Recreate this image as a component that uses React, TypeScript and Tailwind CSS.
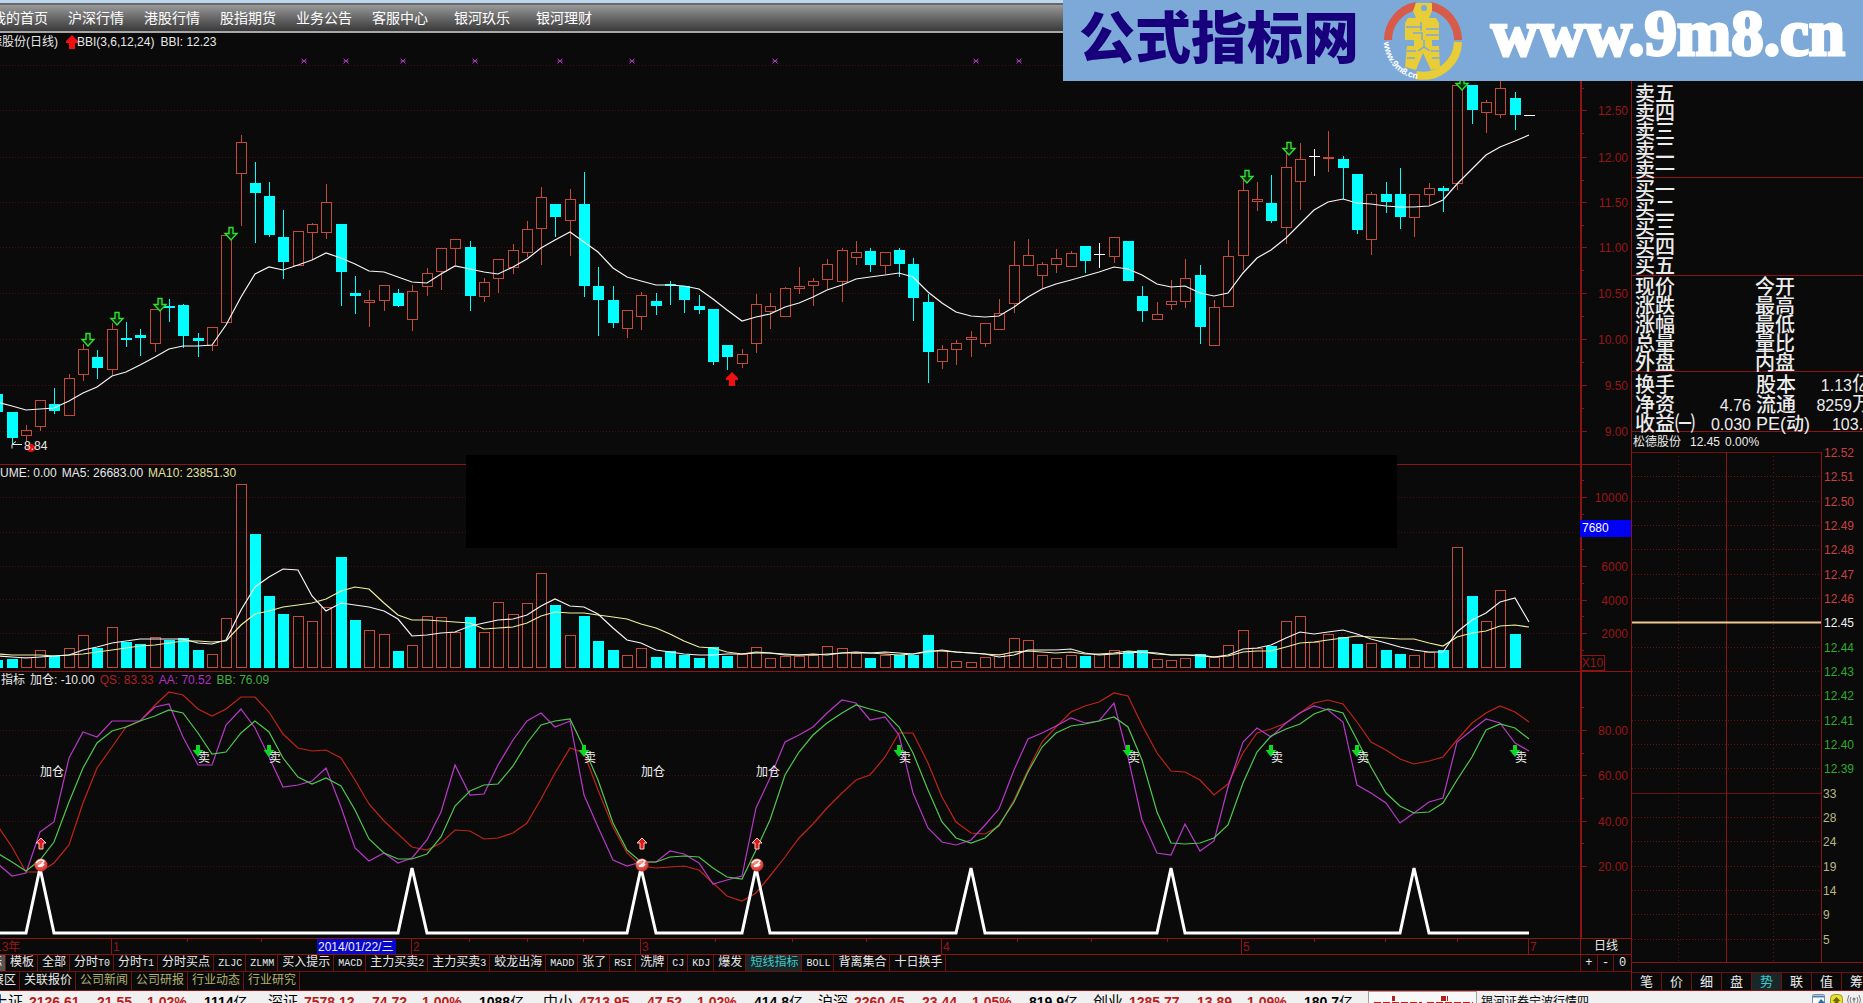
import { Fragment } from 'react'

type Kind = 'r' | 'c' | 'w'
// kind, high, body top, body bottom, low, volume top
type Bar = [Kind, number, number, number, number, number]

const FONT = "font-['Liberation_Sans','Noto_Sans_CJK_SC',sans-serif]"
const MONO = "font-['Liberation_Mono','Noto_Sans_CJK_SC',monospace]"

const RED = '#c44a3a'
const CYAN = '#00ffff'
const AXIS = '#8c1414'
const COLORS = { r: RED, c: CYAN, w: '#ffffff' }

// the first bar is half outside the window, so it has index -1
const barX = (i: number) => Math.round(11.5 + 14.315 * i)

const bars: Bar[] = [
  ['c', 394, 394, 412, 412, 660], ['c', 412, 412, 438, 444, 659], ['r', 425, 430, 436, 441, 657],
  ['r', 400, 400, 427, 431, 650], ['c', 388, 404, 411, 414, 656], ['r', 374, 378, 416, 416, 648],
  ['r', 344, 349, 375, 381, 635], ['c', 350, 357, 368, 379, 648], ['r', 323, 329, 370, 375, 627],
  ['c', 322, 338, 340, 347, 642], ['c', 329, 335, 338, 356, 644], ['r', 309, 309, 344, 352, 637],
  ['c', 299, 306, 308, 322, 640], ['c', 304, 305, 336, 348, 638], ['c', 333, 338, 341, 357, 650],
  ['r', 327, 327, 346, 351, 654], ['r', 235, 235, 323, 323, 618], ['r', 135, 142, 174, 226, 484],
  ['c', 162, 183, 193, 243, 534], ['c', 182, 196, 235, 237, 596], ['c', 210, 237, 262, 279, 614],
  ['r', 231, 231, 266, 266, 616], ['r', 223, 224, 233, 260, 621], ['r', 184, 202, 233, 239, 607],
  ['c', 224, 224, 272, 306, 557], ['c', 276, 293, 296, 314, 620], ['r', 290, 300, 303, 327, 630],
  ['r', 285, 285, 301, 311, 634], ['c', 289, 293, 306, 307, 651], ['r', 285, 291, 320, 331, 645],
  ['r', 268, 273, 287, 296, 616], ['r', 248, 248, 272, 290, 617], ['r', 239, 239, 249, 265, 632],
  ['c', 241, 247, 296, 311, 617], ['r', 278, 282, 297, 302, 632], ['r', 259, 259, 279, 293, 602],
  ['r', 244, 250, 268, 274, 614], ['r', 221, 229, 253, 257, 603], ['r', 187, 197, 229, 265, 573],
  ['c', 204, 204, 217, 237, 605], ['r', 189, 199, 221, 256, 635], ['c', 172, 204, 286, 297, 616],
  ['c', 267, 286, 300, 336, 641], ['c', 286, 300, 323, 328, 650], ['r', 310, 310, 329, 338, 655],
  ['r', 292, 295, 317, 330, 648], ['c', 293, 301, 306, 315, 657], ['c', 281, 284, 286, 305, 651],
  ['c', 286, 286, 300, 313, 655], ['c', 295, 306, 310, 314, 658], ['c', 309, 309, 362, 365, 647],
  ['c', 345, 345, 357, 370, 656], ['r', 349, 354, 364, 368, 654], ['r', 294, 304, 344, 353, 647],
  ['r', 293, 306, 312, 329, 658], ['r', 287, 288, 317, 317, 656], ['r', 267, 286, 289, 294, 656],
  ['r', 278, 281, 286, 306, 655], ['r', 259, 264, 280, 289, 646], ['r', 248, 250, 282, 302, 648],
  ['r', 241, 252, 258, 265, 653], ['c', 248, 251, 265, 272, 658], ['r', 252, 252, 266, 274, 655],
  ['c', 248, 250, 264, 277, 655], ['c', 258, 264, 298, 321, 655], ['c', 294, 302, 352, 383, 635],
  ['r', 345, 349, 362, 369, 650], ['r', 340, 343, 350, 365, 661], ['r', 331, 337, 340, 357, 662],
  ['r', 323, 323, 344, 347, 657], ['r', 299, 313, 330, 330, 654], ['r', 241, 265, 304, 313, 638],
  ['r', 239, 255, 266, 266, 640], ['r', 262, 264, 276, 288, 655], ['r', 249, 258, 265, 273, 658],
  ['r', 251, 253, 267, 267, 655], ['c', 246, 246, 261, 273, 656], ['w', 243, 254, 255, 268, 654],
  ['r', 237, 237, 257, 263, 650], ['c', 241, 241, 281, 281, 651], ['c', 286, 296, 311, 322, 650],
  ['r', 302, 314, 320, 320, 659], ['r', 280, 301, 305, 310, 660], ['r', 259, 278, 302, 308, 658],
  ['c', 265, 275, 327, 344, 654], ['r', 300, 307, 346, 346, 657], ['r', 240, 256, 307, 307, 645],
  ['r', 180, 190, 256, 270, 630], ['r', 182, 199, 202, 211, 648], ['c', 175, 203, 221, 223, 646],
  ['r', 153, 167, 228, 244, 621], ['r', 143, 159, 182, 210, 616], ['w', 149, 156, 157, 176, 642],
  ['r', 131, 157, 158, 172, 634], ['c', 156, 159, 168, 199, 637], ['c', 174, 174, 230, 234, 644],
  ['r', 192, 194, 240, 255, 643], ['c', 182, 194, 202, 213, 650], ['c', 168, 194, 217, 229, 654],
  ['r', 194, 194, 218, 237, 655], ['r', 183, 188, 195, 205, 652], ['c', 186, 188, 191, 212, 650],
  ['r', 85, 85, 184, 190, 547], ['c', 85, 85, 110, 124, 596], ['r', 100, 102, 113, 133, 621],
  ['r', 78, 88, 115, 118, 590], ['c', 92, 98, 115, 130, 634], ['w', 115, 115, 116, 116, 667],
]

const bbi = [
  402, 406, 410, 409, 408, 401, 393, 387, 376, 372, 365, 357, 349, 346, 346, 345, 325, 297, 274, 267, 270, 265,
  260, 253, 258, 264, 271, 272, 277, 282, 283, 274, 266, 269, 272, 274, 267, 259, 248, 240, 232, 242, 252, 268,
  277, 281, 285, 285, 286, 289, 299, 310, 321, 317, 314, 307, 303, 297, 290, 285, 279, 277, 275, 273, 277, 292,
  303, 312, 316, 317, 316, 307, 297, 289, 284, 280, 276, 272, 267, 269, 275, 284, 287, 286, 293, 296, 293, 273,
  258, 250, 238, 224, 210, 202, 199, 203, 204, 206, 207, 207, 206, 200, 184, 169, 155, 147, 141, 135,
]

const ma5 = [
  656, 657, 658, 657, 656, 655, 650, 647, 643, 641, 639, 639, 639, 639, 643, 644, 640, 610, 587, 577, 569, 570,
  596, 611, 603, 605, 607, 611, 619, 636, 635, 633, 632, 626, 623, 620, 619, 615, 606, 599, 606, 607, 614, 628,
  640, 643, 650, 652, 654, 655, 655, 654, 654, 653, 653, 655, 655, 654, 655, 653, 652, 653, 652, 653, 654, 651,
  651, 652, 653, 654, 657, 655, 650, 650, 650, 649, 653, 655, 654, 653, 652, 653, 655, 655, 655, 657, 655, 649,
  648, 645, 638, 632, 634, 632, 630, 634, 639, 643, 647, 650, 652, 652, 632, 620, 613, 602, 598, 622,
]

const ma10 = [
  654, 655, 655, 655, 656, 655, 654, 652, 650, 648, 646, 645, 643, 641, 641, 642, 641, 625, 614, 611, 607, 605,
  603, 599, 591, 587, 589, 603, 615, 620, 620, 621, 622, 623, 629, 628, 627, 623, 616, 612, 613, 613, 615, 617,
  619, 624, 628, 634, 641, 647, 648, 652, 654, 652, 653, 654, 655, 655, 654, 653, 653, 653, 654, 655, 654, 652,
  650, 652, 653, 654, 655, 652, 651, 652, 653, 652, 654, 654, 653, 651, 652, 654, 655, 655, 656, 657, 656, 652,
  651, 651, 647, 643, 642, 640, 638, 636, 637, 638, 639, 639, 643, 646, 637, 633, 631, 626, 625, 627,
]

const qs = [
  825, 847, 872, 872, 863, 845, 803, 768, 747, 727, 721, 705, 692, 695, 709, 716, 709, 697, 697, 712, 734, 748,
  751, 750, 758, 780, 804, 821, 834, 847, 850, 843, 830, 831, 839, 838, 833, 823, 799, 773, 748, 753, 790, 827,
  853, 866, 868, 867, 866, 870, 883, 896, 901, 893, 876, 857, 838, 824, 808, 793, 780, 775, 757, 733, 733, 763,
  797, 822, 833, 834, 826, 800, 770, 742, 727, 712, 706, 702, 693, 696, 725, 753, 771, 772, 780, 795, 784, 753,
  733, 729, 723, 713, 703, 700, 704, 722, 742, 750, 759, 764, 761, 757, 740, 723, 713, 706, 712, 722,
]

const aa = [
  863, 876, 873, 832, 822, 758, 732, 737, 721, 721, 721, 707, 704, 737, 765, 765, 725, 709, 728, 757, 787, 785,
  781, 768, 807, 848, 861, 853, 863, 858, 840, 812, 765, 795, 794, 765, 740, 721, 713, 727, 721, 795, 827, 860,
  866, 862, 862, 851, 854, 863, 884, 880, 876, 808, 778, 742, 735, 727, 713, 700, 703, 720, 717, 735, 793, 828,
  842, 845, 840, 825, 809, 770, 739, 733, 726, 718, 723, 721, 703, 757, 820, 853, 855, 824, 851, 841, 787, 742,
  728, 737, 723, 713, 706, 710, 722, 785, 793, 803, 823, 813, 802, 798, 742, 730, 719, 723, 743, 751,
]

const bb = [
  853, 862, 871, 860, 842, 802, 768, 743, 731, 727, 721, 716, 710, 713, 733, 754, 752, 733, 721, 732, 758, 777,
  784, 778, 786, 810, 839, 853, 859, 859, 854, 837, 806, 791, 785, 784, 766, 743, 725, 721, 719, 748, 780, 823,
  850, 862, 862, 857, 856, 857, 868, 877, 879, 850, 820, 775, 752, 735, 723, 713, 705, 709, 713, 727, 753, 790,
  822, 838, 843, 838, 825, 802, 772, 747, 733, 726, 724, 721, 717, 727, 760, 812, 843, 844, 843, 838, 825, 783,
  752, 736, 729, 724, 714, 709, 713, 740, 767, 793, 806, 813, 812, 803, 780, 757, 730, 724, 728, 739,
]

const peaks = [2, 28, 44, 52, 67, 81, 98]
const addPoints = [2, 44, 52]
const sellPoints = [13, 18, 40, 62, 78, 88, 94, 105]
const crosses = [304, 346, 403, 475, 560, 632, 775, 976, 1019]
const downArrows = [
  [88, 333], [117, 312], [160, 298], [231, 227], [1247, 170], [1289, 142], [1462, 77],
]

const toPoints = (ys: number[]) => ys.map((y, i) => `${barX(i - 1)},${y}`).join(' ')

const spikePoints = () => {
  const pts = ['-3,933']
  peaks.forEach((p) => pts.push(`${barX(p - 1)},933`, `${barX(p)},868`, `${barX(p + 1)},933`))
  pts.push(`${barX(106)},933`)
  return pts.join(' ')
}

const Grid = ({ ys, width = 1580 }: { ys: number[]; width?: number }) => (
  <>
    {ys.map((y) => (
      <line key={y} x1="0" x2={width} y1={y + 0.5} y2={y + 0.5} stroke="#4a0c0c" strokeDasharray="1 2" />
    ))}
  </>
)

const Line = ({ ys, color }: { ys: number[]; color: string }) => (
  <polyline points={toPoints(ys)} fill="none" stroke={color} strokeWidth="1.2" />
)

const UpArrow = ({ x, y }: { x: number; y: number }) => (
  <path d={`M${x} ${y}l6 6v2h-3v6h-6v-6h-3v-2z`} fill="#f01010" />
)

type AxisProps = { top: number; height: number; labels: [number, string][]; minor: number[] }

const Axis = ({ top, height, labels, minor }: AxisProps) => (
  <svg
    className="w-[51px] shrink-0"
    height={height}
    viewBox={`0 ${top} 51 ${height}`}
    shapeRendering="crispEdges"
  >
    <path d={`M1 ${top}v${height}`} stroke={AXIS} strokeWidth="2" />
    {minor.map((y) => (
      <path key={y} d={`M2 ${y}h2`} stroke={AXIS} />
    ))}
    {labels.map(([y, text]) => (
      <Fragment key={text}>
        <path d={`M2 ${y + 0.5}h5`} stroke={AXIS} />
        <text x="48" y={y + 5} textAnchor="end" fontSize="12" fill="#981616">
          {text}
        </text>
      </Fragment>
    ))}
  </svg>
)

const PricePanel = () => (
  <section className="relative flex border-b border-[#8c1414]">
    <svg
      className="h-[431px] min-w-0 flex-1"
      viewBox="0 33 1580 431"
      preserveAspectRatio="none"
    >
      <Grid ys={[65, 110, 157, 202, 247, 293, 339, 385, 431]} />
      <g shapeRendering="crispEdges">
        {bars.map(([kind, high, top, bottom, low], i) => {
          const x = barX(i - 1)
          const color = COLORS[kind]
          return (
            <g key={i} stroke={color} fill={kind === 'c' ? color : 'none'}>
              {high < top && <path d={`M${x + 0.5} ${high}V${top}`} />}
              {low > bottom && <path d={`M${x + 0.5} ${bottom}V${low}`} />}
              {kind === 'w' ? (
                <path d={`M${x - 5} ${top + 0.5}h11`} />
              ) : (
                <rect x={x - 4.5} y={top + 0.5} width="10" height={Math.max(1, bottom - top - 1)} />
              )}
            </g>
          )
        })}
      </g>
      <Line ys={bbi} color="#f5f5f5" />
      {crosses.map((x) => (
        <path key={x} d={`M${x - 2.5} 58.5l5 5m0-5l-5 5M${x - 2.5} 61h5`} stroke="#a838b8" />
      ))}
      {downArrows.map(([x, y]) => (
        <path
          key={x}
          d={`M${x - 2} ${y + 0.5}h4v6h4l-6 6.500l-6-6.500h4z`}
          fill="#0a2a0a"
          stroke="#30e030"
          strokeWidth="1.4"
        />
      ))}
      <UpArrow x={732} y={372} />
      <circle cx="31" cy="448" r="4" fill="#e01010" />
      <path d="M22 444.500H12m4-3l-4 3v4" fill="none" stroke="#e8e8e8" />
      <text x="24" y="450" fontSize="12" fill="#e8e8e8">8.84</text>
    </svg>
    <Axis
      top={33}
      height={431}
      labels={[
        [110, '12.50'], [157, '12.00'], [202, '11.50'], [247, '11.00'],
        [293, '10.50'], [339, '10.00'], [385, '9.50'], [431, '9.00'],
      ]}
      minor={[88, 133, 180, 225, 270, 316, 362, 408]}
    />
    <h2 className="absolute top-0 -left-[22px] flex h-[18px] items-center text-xs text-[#e8e8e8]">
      松德股份(日线)
      <svg className="ml-2" width="12" height="14" viewBox="0 0 12 14">
        <UpArrow x={6} y={0} />
      </svg>
      <span className="-ml-px">BBI(3,6,12,24)</span>
      <span className="ml-1.5">BBI: 12.23</span>
    </h2>
  </section>
)

const VolumePanel = () => (
  <section className="relative flex border-b border-[#8c1414]">
    <svg
      className="h-[206px] min-w-0 flex-1"
      viewBox="0 465 1580 206"
      preserveAspectRatio="none"
    >
      <Grid ys={[497, 532, 566, 599, 633]} />
      <g shapeRendering="crispEdges">
        {bars.map(([kind, , , , , top], i) => (
          <rect
            key={i}
            x={barX(i - 1) - 4.5}
            y={top + 0.5}
            width="10"
            height={667 - top}
            stroke={kind === 'c' ? CYAN : RED}
            fill={kind === 'c' ? CYAN : 'none'}
          />
        ))}
      </g>
      <Line ys={ma10} color="#f0f0a0" />
      <Line ys={ma5} color="#f5f5f5" />
    </svg>
    <Axis
      top={465}
      height={206}
      labels={[[497, '10000'], [566, '6000'], [600, '4000'], [633, '2000']]}
      minor={[480, 514, 549, 583, 616, 650]}
    />
    <h2 className="absolute top-0 -left-[24px] flex h-4 items-center gap-[5px] text-xs text-[#e8e8e8]">
      <span>VOLUME: 0.00</span>
      <span>MA5: 26683.00</span>
      <span className="text-[#e0e0a0]">MA10: 23851.30</span>
    </h2>
    <span className="absolute top-[55px] right-0 h-[17px] w-[51px] bg-[#0000f4] pl-0.5 text-xs leading-4 text-white">
      7680
    </span>
    <span className="absolute right-[26px] bottom-0 h-4 w-[25px] border border-[#8c1414] text-center text-xs leading-[14px] text-[#981616]">
      X10
    </span>
  </section>
)

const IndicatorPanel = () => (
  <section className="relative flex border-b border-[#8c1414]">
    <svg
      className="h-[266px] min-w-0 flex-1"
      viewBox="0 672 1580 266"
      preserveAspectRatio="none"
    >
      <defs>
        <radialGradient id="ball" cx="0.4" cy="0.3" r="0.8">
          <stop offset="0" stopColor="#ff9a8a" />
          <stop offset="1" stopColor="#c81818" />
        </radialGradient>
      </defs>
      <Grid ys={[730, 775, 821, 866]} />
      <Line ys={qs} color="#c02418" />
      <Line ys={aa} color="#b838c8" />
      <Line ys={bb} color="#50c850" />
      <polyline points={spikePoints()} fill="none" stroke="#fff" strokeWidth="3" />
      {addPoints.map((p) => {
        const x = barX(p)
        return (
          <g key={p}>
            <text x={x} y="776" fontSize="12" fill="#f0f0f0">加仓</text>
            <path d={`M${x + 1} 838l5 5h-3v6h-4v-6h-3z`} fill="#e01818" stroke="#ffc8c0" />
            <circle cx={x + 1} cy="865" r="6.500" fill="url(#ball)" />
            <path
              d={`M${x - 4} 863q4-5 8-2q-2 4-6 5q4 1 6-2`}
              fill="none"
              stroke="#fff"
              strokeWidth="1.400"
            />
          </g>
        )
      })}
      {sellPoints.map((p) => {
        const x = barX(p)
        return (
          <g key={p}>
            <path d={`M${x - 2} 745h4v5h3.500l-5.500 7l-5.500-7h3.500z`} fill="#10d820" />
            <text x={x} y="762" fontSize="12" fill="#f0f0f0">卖</text>
          </g>
        )
      })}
    </svg>
    <Axis
      top={672}
      height={266}
      labels={[[730, '80.00'], [775, '60.00'], [821, '40.00'], [866, '20.00']]}
      minor={[707, 753, 798, 843]}
    />
    <h2 className="absolute top-0 left-px flex h-4 items-center gap-[5px] text-xs text-[#e8e8e8]">
      <span>指标</span>
      <span>加仓: -10.00</span>
      <span className="text-[#b02020]">QS: 83.33</span>
      <span className="text-[#b030c0]">AA: 70.52</span>
      <span className="text-[#40b040]">BB: 76.09</span>
    </h2>
  </section>
)

const months: [number, string][] = [[111, '1'], [411, '2'], [640, '3'], [941, '4'], [1241, '5'], [1528, '7']]
const weekTicks = [187, 261, 469, 527, 583, 715, 792, 866, 1017, 1091, 1167, 1314, 1385, 1457]

const DateRow = () => (
  <div className="relative flex h-4 border-b border-[#8c1414]">
    <svg className="h-[15px] min-w-0 flex-1" viewBox="0 939 1580 15" preserveAspectRatio="none">
      <text x="-5" y="951" fontSize="12" fill="#981616">13年</text>
      {months.map(([x, label]) => (
        <g key={label}>
          <path d={`M${x + 0.5} 939v15`} stroke={AXIS} />
          <text x={x + 2} y="951" fontSize="12" fill="#981616">{label}</text>
        </g>
      ))}
      {weekTicks.map((x) => (
        <path key={x} d={`M${x + 0.5} 939v3`} stroke={AXIS} />
      ))}
      <rect x="317" y="939" width="79" height="15" fill="#0808c8" />
      <text x="318" y="951" fontSize="12" fill="#f0f0f0">2014/01/22/三</text>
    </svg>
    <span className="w-[51px] border-l border-[#8c1414] text-center text-xs leading-[15px] text-[#e8e8e8]">日线</span>
  </div>
)

const indicatorTabs = [
  '指标', '模板', '全部', '分时T0', '分时T1', '分时买点', 'ZLJC', 'ZLMM', '买入提示', 'MACD', '主力买卖2',
  '主力买卖3', '蛟龙出海', 'MADD', '张了', 'RSI', '洗牌', 'CJ', 'KDJ', '爆发', '短线指标', 'BOLL', '背离集合',
  '十日换手',
]
const infoTabs = ['扩展区', '关联报价', '公司新闻', '公司研报', '行业动态', '行业研究']

// latin letters are half the width of a chinese one
const TabLabel = ({ text }: { text: string }) => (
  <>
    {text.split(/([A-Z0-9]+)/).filter(Boolean).map((part) => (
      <span key={part} className={/[A-Z0-9]/.test(part) ? 'text-[10px]' : ''}>
        {part}
      </span>
    ))}
  </>
)

const tabStyle = (text: string) => {
  if (text === '指标') return 'bg-[#555] text-white'
  if (text === '短线指标') return 'bg-[#182828] text-[#40c8c8]'
  return 'text-[#e8e8e8]'
}

const TabRows = () => (
  <div className={`${MONO} text-xs`}>
    <div className="flex h-[17px] border-b border-[#701010]">
      <div className="-ml-[26px] flex min-w-0 flex-1">
        {indicatorTabs.map((tab) => (
          <button
            key={tab}
            className={`shrink-0 border-r border-[#701010] pr-[3px] pl-1 leading-4 whitespace-nowrap ${tabStyle(tab)}`}
          >
            <TabLabel text={tab} />
          </button>
        ))}
      </div>
      <div className="grid w-[51px] grid-cols-3 border-l border-[#701010] text-[#e8e8e8]">
        <button className="border-r border-[#701010] leading-4">+</button>
        <button className="border-r border-[#701010] leading-4">-</button>
        <button className="leading-4">0</button>
      </div>
    </div>
    <div className="-ml-[24px] flex h-[18px]">
      {infoTabs.map((tab, i) => (
        <button
          key={tab}
          className={`border-r border-[#701010] pr-[3px] pl-1 leading-4 ${i < 2 ? 'text-[#e8e8e8]' : 'text-[#b0b070]'}`}
        >
          {tab}
        </button>
      ))}
    </div>
  </div>
)

const quotes = [
  ['现价', '', '今开', ''],
  ['涨跌', '', '最高', ''],
  ['涨幅', '', '最低', ''],
  ['总量', '', '量比', ''],
  ['外盘', '', '内盘', ''],
]
const finance = [
  ['换手', '', '股本', '1.13亿'],
  ['净资', '4.76', '流通', '8259万'],
  ['收益㈠', '0.030', 'PE(动)', '103.7'],
]

const QuoteTable = ({ rows }: { rows: string[][] }) => (
  <table className="w-[240px] leading-[19px]">
    <tbody>
      {rows.map(([a, b, c, d]) => (
        <tr key={a} className="h-[19px]">
          <th className="w-[62px] p-0 pl-[3px] text-left text-xl leading-[19px] font-medium whitespace-nowrap">{a}</th>
          <td className="w-[56px] p-0 text-right">{b}</td>
          <th
            className={`w-[60px] p-0 pl-[5px] text-left leading-[19px] font-medium whitespace-nowrap ${
              c.startsWith('PE') ? 'text-lg' : 'text-xl'
            }`}
          >
            {c}
          </th>
          <td className="p-0 text-right whitespace-nowrap">
            {d.replace(/[亿万]/, '')}
            {/[亿万]/.test(d) && <span className="text-xl leading-[19px]">{d.slice(-1)}</span>}
          </td>
        </tr>
      ))}
    </tbody>
  </table>
)

const OrderList = ({ rows }: { rows: string[] }) => (
  <ul className="pl-[3px] text-xl leading-[19px] font-medium">
    {rows.map((row) => (
      <li key={row}>{row}</li>
    ))}
  </ul>
)

const trendLabels = [
  '12.52', '12.51', '12.50', '12.49', '12.48', '12.47', '12.46', '12.45', '12.44', '12.43', '12.42', '12.41',
  '12.40', '12.39', '33', '28', '24', '19', '14', '9', '5',
]

const trendColor = (i: number) => {
  if (i < 7) return '#c84040'
  if (i === 7) return '#f0f0f0'
  if (i < 14) return '#30a830'
  return '#b8b888'
}

const TrendChart = () => (
  <svg className="h-[520px] w-[232px] overflow-visible" viewBox="1631 452 232 520">
    <g shapeRendering="crispEdges" stroke="#701010">
      {trendLabels.map((label, i) => {
        const y = Math.round(452 + i * 24.333) + 0.5
        const solid = i === 0 || i === 14
        return (
          <path key={label} d={`M1632 ${y}h190`} strokeDasharray={solid ? undefined : '1 2'} />
        )
      })}
      <path d="M1678.500 452v510M1773.500 452v510" strokeDasharray="1 3" />
      <path d="M1726.500 452v510M1821.500 452v510M1632 962.500h231" stroke={AXIS} />
    </g>
    <path d="M1631 622.500h190" stroke="#f0c890" strokeWidth="2" />
    {trendLabels.map((label, i) => (
      <text
        key={label}
        x={i < 14 ? 1824 : 1823}
        y={Math.round(452 + i * 24.333) + 5}
        fontSize="12"
        fill={trendColor(i)}
      >
        {label}
      </text>
    ))}
  </svg>
)

const sideTabs = ['笔', '价', '细', '盘', '势', '联', '值', '筹']

const SidePanel = () => (
  <aside className="w-[232px] shrink-0 overflow-hidden border-l border-[#8c1414] pt-[49px] text-base text-[#ececec]">
    <div className="h-24 border-b border-[#8c1414] pt-[3px]">
      <OrderList rows={['卖五', '卖四', '卖三', '卖二', '卖一']} />
    </div>
    <div className="h-[98px] border-b border-[#8c1414] pt-[3px]">
      <OrderList rows={['买一', '买二', '买三', '买四', '买五']} />
    </div>
    <div className="h-24 border-b border-[#8c1414] pt-0.5">
      <QuoteTable rows={quotes} />
    </div>
    <div className="h-[60px] border-b border-[#8c1414] pt-[3px]">
      <QuoteTable rows={finance} />
    </div>
    <h2 className="flex h-5 items-center gap-[5px] pl-px text-xs">
      <span className="mr-1">松德股份</span>
      <span>12.45</span>
      <span>0.00%</span>
    </h2>
    <div className="-ml-px">
      <TrendChart />
    </div>
    <div className="flex border-t border-[#701010] text-[13px]">
      {sideTabs.map((tab) => (
        <button
          key={tab}
          className={`h-[17px] w-[30px] shrink-0 border-r border-[#701010] leading-4 ${
            tab === '势' ? 'bg-[#182828] text-[#40c8c8]' : ''
          }`}
        >
          {tab}
        </button>
      ))}
    </div>
  </aside>
)

const Banner = () => (
  <div className="absolute top-0 right-0 flex h-[81px] w-[800px] items-center bg-[#7ca9d8]">
    <span className="ml-4 pb-1 text-[56px] leading-[72px] font-black whitespace-nowrap text-[#18007c]">公式指标网</span>
    <svg className="ml-6 shrink-0" width="80" height="80" viewBox="0 0 80 80">
      <path d="M5 39a35 35 0 0 1 28-34" fill="none" stroke="#d85a48" strokeWidth="8" />
      <path d="M47 5a35 35 0 0 1 28 34" fill="none" stroke="#d85a48" strokeWidth="8" />
      <path d="M75 41a35 35 0 0 1-42 33" fill="none" stroke="#e8cc38" strokeWidth="8" />
      <path
        d="M33 2h16v8l-3 7h7l3 5v17h-7v6h7l1 22-9 2-8-17-7 17-11-3 2-21h7v-6h-9V22l3-5h8l-3-7z"
        fill="#e8cc38"
      />
      <circle cx="41" cy="7" r="3" fill="#7ca9d8" />
      <path
        d="M23 26h16M38 21v9M30 32h9v7M43 28h13M43 34h13M24 50h9m15 0h9M24 57h8m17 0h9M41 39v7M35 50l6-4l6 4"
        fill="none"
        stroke="#7ca9d8"
        strokeWidth="1.500"
      />
      <path id="arc" d="M1 41a38 38 0 0 0 34 37" fill="none" />
      <text fontSize="9" fontWeight="bold" fill="#fff">
        <textPath href="#arc">www.9m8.cn</textPath>
      </text>
    </svg>
    <span className="ml-7 pb-4 font-['Liberation_Serif',serif] text-[65px] leading-[72px] font-bold text-white [-webkit-text-stroke:3px_white]">
      www.9m8.cn
    </span>
  </div>
)

const NavBar = () => (
  <header className="border-t-3 border-[#bcd6f0]">
    <nav className="-ml-2 flex h-[30px] items-center gap-5 border-t-2 border-b-2 border-t-[#686868] border-b-[#a8a8a8] bg-linear-to-b from-[#9a9a9a] to-[#3a3a3a] text-sm text-white">
      {['我的首页', '沪深行情', '港股行情', '股指期货', '业务公告', '客服中心'].map((item) => (
        <a key={item} href="#">{item}</a>
      ))}
      <a href="#" className="ml-1.5">银河玖乐</a>
      <a href="#" className="ml-1.5">银河理财</a>
    </nav>
  </header>
)

const indexes = [
  ['上证', '2126.61', '21.55', '1.02%', '1114亿'],
  ['深证', '7578.12', '74.72', '1.00%', '1088亿'],
  ['中小', '4713.95', '47.52', '1.02%', '414.8亿'],
  ['沪深', '2260.45', '23.44', '1.05%', '819.9亿'],
  ['创业', '1285.77', '13.89', '1.09%', '180.7亿'],
]

const StatusBar = () => (
  <footer className="flex min-h-0 flex-1 items-start overflow-hidden border-t border-[#8c1414] bg-[#f0f0f0] pt-[3px] text-sm leading-4 text-black">
    <div className="-ml-[7px] flex shrink-0">
      {indexes.map(([name, value, change, percent, amount]) => (
        <div key={name} className="flex w-[275px] font-bold text-[#b82020]">
          <span className="w-[36px] text-[15px] font-normal text-black">{name}</span>
          <span className="w-[68px]">{value}</span>
          <span className="w-[50px]">{change}</span>
          <span className="w-[57px]">{percent}</span>
          <span className="text-black">
            {amount.slice(0, -1)}
            <span className="font-normal">亿</span>
          </span>
        </div>
      ))}
    </div>
    <svg className="-mt-[3px] shrink-0" width="109" height="14" viewBox="0 0 109 14" shapeRendering="crispEdges">
      <rect x="0.500" y="0.500" width="108" height="16" fill="#f8f8f8" stroke="#a0a0a0" />
      <path d="M6 12h48M59 12h46" stroke="#b82020" strokeWidth="2" strokeDasharray="7 2" />
      <path d="M24 5h3v5h-3zM73 5h5v5h-5zM79 5h1v5h-1z" fill="#b82020" />
    </svg>
    <span className="ml-1 text-xs leading-4 whitespace-nowrap">银河证券宁波行情四</span>
    <svg className="ml-auto shrink-0" width="52" height="14" viewBox="0 0 52 14">
      <rect x="1.500" y="0.500" width="12" height="14" rx="1" fill="#fff" stroke="#7890a8" />
      <path d="M2 2.500h11" stroke="#5080b0" strokeWidth="2" />
      <path d="M10 5l4 4h-2v4H9V9H7z" fill="#2070b0" />
      <rect x="19.500" y="0.500" width="12" height="14" rx="4" fill="#e8e030" stroke="#a09820" />
      <path d="M25.500 3l4 4h-2v4h-4V7h-2z" fill="#706808" />
      <path
        d="M43 6v7M40 3q-2 3 0 6M46 3q2 3 0 6M38 1q-3 5 0 10M48 1q3 5 0 10"
        fill="none"
        stroke="#808080"
      />
      <circle cx="43" cy="5" r="1.500" fill="#808080" />
    </svg>
  </footer>
)

export default function App() {
  return (
    <div className={`${FONT} relative flex h-screen flex-col overflow-hidden bg-[#0a0a0a]`}>
      <NavBar />
      <main className="flex">
        <div className="relative min-w-0 flex-1 overflow-hidden">
          <PricePanel />
          <VolumePanel />
          <IndicatorPanel />
          <DateRow />
          <TabRows />
          {/* blacked out part between the two charts */}
          <div className="absolute top-[422px] left-[466px] h-[93px] w-[931px] bg-black" />
        </div>
        <SidePanel />
      </main>
      <StatusBar />
      <Banner />
    </div>
  )
}
